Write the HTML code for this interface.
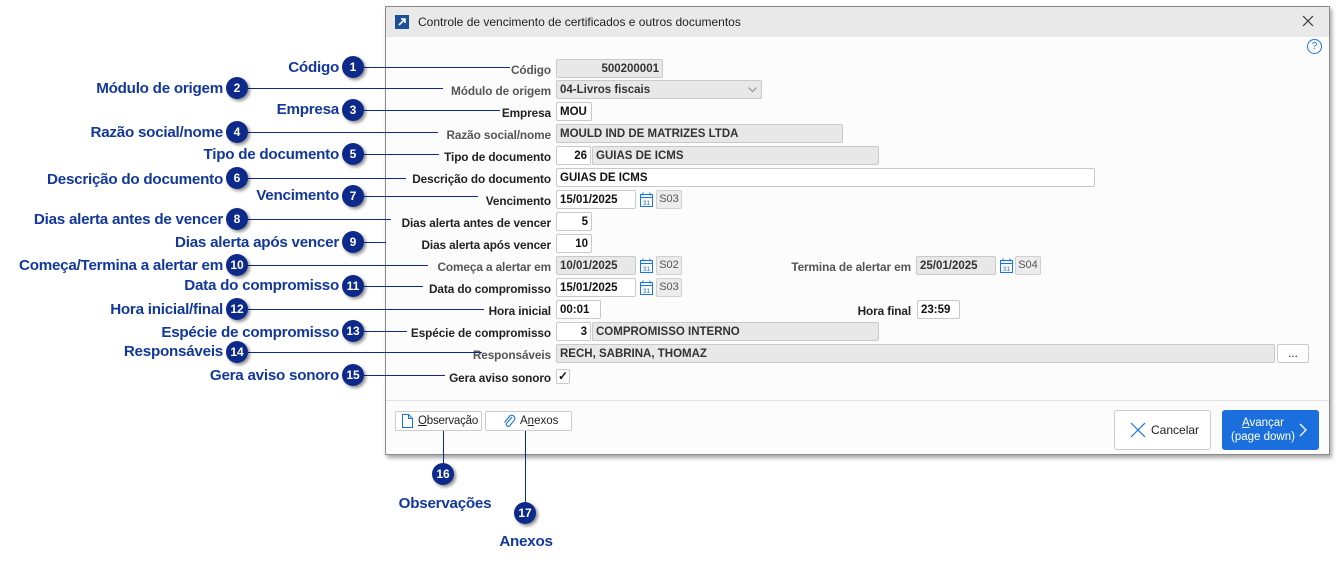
<!DOCTYPE html>
<html><head><meta charset="utf-8"><style>
*{margin:0;padding:0;box-sizing:border-box}
body{width:1340px;height:567px;background:#fff;position:relative;overflow:hidden;font-family:"Liberation Sans",sans-serif}
.a{position:absolute}
.dlg{left:385px;top:6px;width:945px;height:449px;background:#fcfcfc;border:1px solid #8a8a8a;box-shadow:2px 3px 4px rgba(0,0,0,.35)}
.tb{left:0;top:0;width:943px;height:30px;background:#e9e9e9}
.lb{position:absolute;right:789px;font-size:11.8px;font-weight:bold;color:#222;white-space:nowrap;line-height:14px;letter-spacing:-0.1px}
.lb.g{color:#555}
.f{position:absolute;height:19px;border:1px solid #c9c9c9;border-radius:2px;background:#fff;font-size:11.5px;font-weight:bold;color:#111;padding:1px 3px 0;line-height:17px;white-space:nowrap;overflow:hidden}
.f.d{background:#e8e8e8;color:#333}
.f.r{text-align:right}
.s{position:absolute;height:19px;width:26px;border:1px solid #d0d0d0;border-radius:2px;background:#ececec;font-size:11px;color:#555;line-height:17px;text-align:center}
.c{position:absolute;width:22px;height:22px;border-radius:50%;background:#0d2a8a;color:#fff;font:bold 12px "Liberation Sans",sans-serif;text-align:center;line-height:22px;box-shadow:2px 2px 3px rgba(0,0,0,.45)}
.cl{position:absolute;font-size:15.2px;font-weight:bold;color:#13389b;white-space:nowrap;line-height:18px;letter-spacing:-0.25px}
.ln{position:absolute;height:1.3px;background:#0d2a8a}
.vl{position:absolute;width:1.3px;background:#0d2a8a}
.cal{position:absolute;width:13px;height:15px}
</style></head><body>
<div class="a dlg">
 <div class="a tb"></div>
 <div class="a" style="left:9px;top:8px;width:14px;height:14px;background:#1a4f9a"><svg width="14" height="14"><path d="M4 10L10 4M6 4h4v4" stroke="#fff" stroke-width="1.6" fill="none"/></svg></div>
 <div class="a" style="left:32px;top:8px;font:12px 'Liberation Sans',sans-serif;color:#222">Controle de vencimento de certificados e outros documentos</div>
 <svg class="a" style="left:916px;top:8px" width="12" height="12"><path d="M1 1L11 11M11 1L1 11" stroke="#333" stroke-width="1.2"/></svg>
 <div class="a" style="left:921px;top:32px;width:15px;height:15px;border:1.3px solid #1a73e8;border-radius:50%;color:#1a73e8;font:10px 'Liberation Sans',sans-serif;text-align:center;line-height:13px">?</div>
 <div class="a" style="left:0;top:393px;width:943px;height:1px;background:#e2e2e2"></div>
</div>

<div class="lb g" style="top:63px">Código</div>
<div class="lb g" style="top:84px">Módulo de origem</div>
<div class="lb" style="top:106px">Empresa</div>
<div class="lb g" style="top:128px">Razão social/nome</div>
<div class="lb" style="top:150px">Tipo de documento</div>
<div class="lb" style="top:172px">Descrição do documento</div>
<div class="lb" style="top:194px">Vencimento</div>
<div class="lb" style="top:216px">Dias alerta antes de vencer</div>
<div class="lb" style="top:238px">Dias alerta após vencer</div>
<div class="lb g" style="top:260px">Começa a alertar em</div>
<div class="lb" style="top:282px">Data do compromisso</div>
<div class="lb" style="top:304px">Hora inicial</div>
<div class="lb" style="top:326px">Espécie de compromisso</div>
<div class="lb g" style="top:348px">Responsáveis</div>
<div class="lb" style="top:371px">Gera aviso sonoro</div>
<div class="lb g" style="top:260px;right:429px">Termina de alertar em</div>
<div class="lb" style="top:304px;right:429px">Hora final</div>

<div class="f d r" style="left:556px;top:59px;width:107px">500200001</div>
<div class="f d" style="left:556px;top:80px;width:206px">04-Livros fiscais<svg style="position:absolute;right:4px;top:6px" width="9" height="6"><path d="M0.5 0.5L4.5 4.5L8.5 0.5" stroke="#888" fill="none"/></svg></div>
<div class="f" style="left:556px;top:102px;width:36px">MOU</div>
<div class="f d" style="left:556px;top:124px;width:287px">MOULD IND DE MATRIZES LTDA</div>
<div class="f r" style="left:556px;top:146px;width:35px">26</div>
<div class="f d" style="left:592px;top:146px;width:287px">GUIAS DE ICMS</div>
<div class="f" style="left:556px;top:168px;width:539px">GUIAS DE ICMS</div>
<div class="f" style="left:556px;top:190px;width:80px">15/01/2025</div>
<div class="f r" style="left:556px;top:212px;width:36px">5</div>
<div class="f r" style="left:556px;top:234px;width:36px">10</div>
<div class="f d" style="left:556px;top:256px;width:80px">10/01/2025</div>
<div class="f" style="left:556px;top:278px;width:80px">15/01/2025</div>
<div class="f" style="left:556px;top:300px;width:45px">00:01</div>
<div class="f r" style="left:556px;top:322px;width:35px">3</div>
<div class="f d" style="left:592px;top:322px;width:287px">COMPROMISSO INTERNO</div>
<div class="f d" style="left:556px;top:344px;width:719px">RECH, SABRINA, THOMAZ</div>
<div class="f" style="left:1277px;top:344px;width:32px;text-align:center;font-weight:normal">...</div>
<div class="f" style="left:556px;top:369px;width:14px;height:15px;line-height:13px;padding:0;text-align:center;font-size:12px">✓</div>
<div class="f d" style="left:916px;top:256px;width:80px">25/01/2025</div>
<div class="f" style="left:917px;top:300px;width:43px">23:59</div>

<svg class="cal" style="left:640px;top:192px" viewBox="0 0 13 15"><rect x="0.5" y="2.5" width="12" height="12" fill="none" stroke="#1a73e8"/><path d="M0.5 5.5h12M3 0.5v3M10 0.5v3" stroke="#1a73e8"/><text x="6.5" y="13" font-size="6.5" fill="#1a73e8" text-anchor="middle" font-family="Liberation Sans">31</text></svg>
<div class="s" style="left:656px;top:190px">S03</div>
<svg class="cal" style="left:640px;top:258px" viewBox="0 0 13 15"><rect x="0.5" y="2.5" width="12" height="12" fill="none" stroke="#1a73e8"/><path d="M0.5 5.5h12M3 0.5v3M10 0.5v3" stroke="#1a73e8"/><text x="6.5" y="13" font-size="6.5" fill="#1a73e8" text-anchor="middle" font-family="Liberation Sans">31</text></svg>
<div class="s" style="left:656px;top:256px">S02</div>
<svg class="cal" style="left:640px;top:280px" viewBox="0 0 13 15"><rect x="0.5" y="2.5" width="12" height="12" fill="none" stroke="#1a73e8"/><path d="M0.5 5.5h12M3 0.5v3M10 0.5v3" stroke="#1a73e8"/><text x="6.5" y="13" font-size="6.5" fill="#1a73e8" text-anchor="middle" font-family="Liberation Sans">31</text></svg>
<div class="s" style="left:656px;top:278px">S03</div>
<svg class="cal" style="left:1000px;top:258px" viewBox="0 0 13 15"><rect x="0.5" y="2.5" width="12" height="12" fill="none" stroke="#1a73e8"/><path d="M0.5 5.5h12M3 0.5v3M10 0.5v3" stroke="#1a73e8"/><text x="6.5" y="13" font-size="6.5" fill="#1a73e8" text-anchor="middle" font-family="Liberation Sans">31</text></svg>
<div class="s" style="left:1015px;top:256px">S04</div>

<div class="a" style="left:395px;top:411px;width:87px;height:20px;border:1px solid #ccc;border-radius:2px;background:#fff;font:11.5px 'Liberation Sans',sans-serif;color:#222;line-height:18px;padding-left:22px;letter-spacing:-0.2px"><svg style="position:absolute;left:6px;top:2px" width="11" height="14"><path d="M0.5 0.5h6l4 4v9h-10z M6.5 0.5v4h4" stroke="#1a73e8" fill="none"/></svg><u>O</u>bservação</div>
<div class="a" style="left:485px;top:411px;width:87px;height:20px;border:1px solid #ccc;border-radius:2px;background:#fff;font:11.5px 'Liberation Sans',sans-serif;color:#222;line-height:18px;padding-left:34px"><svg style="position:absolute;left:17px;top:2px" width="13" height="15"><path d="M9 3L3.5 9.5a2 2 0 0 0 3 2.5L11.5 6a3.2 3.2 0 0 0-4.8-4L1.5 8.5" stroke="#1a73e8" fill="none" stroke-width="1.1"/></svg>A<u>n</u>exos</div>
<div class="a" style="left:1114px;top:410px;width:97px;height:40px;border:1px solid #ccc;border-radius:3px;background:#fff;font:12px 'Liberation Sans',sans-serif;color:#222;line-height:38px;padding-left:36px"><svg style="position:absolute;left:15px;top:11px" width="16" height="16"><path d="M1 1L15 15M15 1L1 15" stroke="#1a73e8" stroke-width="1.2"/></svg>Cancelar</div>
<div class="a" style="left:1222px;top:410px;width:97px;height:40px;border-radius:3px;background:#1b6fdc;font:11.5px 'Liberation Sans',sans-serif;color:#fff;line-height:14px;padding:6px 0 0 4px;text-align:center"><div style="width:74px"><u>A</u>vançar<br>(page down)</div><svg style="position:absolute;right:12px;top:13px" width="8" height="14"><path d="M1 1L7 7L1 13" stroke="#fff" fill="none" stroke-width="1.3"/></svg></div>

<div class="ln" style="left:364px;top:67px;width:146px"></div>
<div class="ln" style="left:248px;top:88px;width:195px"></div>
<div class="ln" style="left:364px;top:110px;width:136px"></div>
<div class="ln" style="left:248px;top:132px;width:190px"></div>
<div class="ln" style="left:364px;top:154px;width:75px"></div>
<div class="ln" style="left:248px;top:178px;width:158px"></div>
<div class="ln" style="left:364px;top:196px;width:114px"></div>
<div class="ln" style="left:248px;top:219px;width:143px"></div>
<div class="ln" style="left:364px;top:242px;width:22px"></div>
<div class="ln" style="left:248px;top:265px;width:180px"></div>
<div class="ln" style="left:364px;top:286px;width:59px"></div>
<div class="ln" style="left:248px;top:309px;width:236px"></div>
<div class="ln" style="left:364px;top:331px;width:43px"></div>
<div class="ln" style="left:248px;top:352px;width:234px"></div>
<div class="ln" style="left:364px;top:375px;width:81px"></div>
<div class="vl" style="left:443px;top:431px;height:33px"></div>
<div class="vl" style="left:525px;top:431px;height:72px"></div>

<div class="c" style="left:342px;top:56px">1</div>
<div class="c" style="left:226px;top:77px">2</div>
<div class="c" style="left:342px;top:99px">3</div>
<div class="c" style="left:226px;top:121px">4</div>
<div class="c" style="left:342px;top:143px">5</div>
<div class="c" style="left:226px;top:167px">6</div>
<div class="c" style="left:342px;top:185px">7</div>
<div class="c" style="left:226px;top:208px">8</div>
<div class="c" style="left:342px;top:231px">9</div>
<div class="c" style="left:226px;top:254px">10</div>
<div class="c" style="left:342px;top:275px">11</div>
<div class="c" style="left:226px;top:298px">12</div>
<div class="c" style="left:342px;top:320px">13</div>
<div class="c" style="left:226px;top:341px">14</div>
<div class="c" style="left:342px;top:364px">15</div>
<div class="c" style="left:432px;top:463px">16</div>
<div class="c" style="left:514px;top:502px">17</div>

<div class="cl" style="right:1001px;top:59px">Código</div>
<div class="cl" style="right:1117px;top:80px">Módulo de origem</div>
<div class="cl" style="right:1001px;top:101px">Empresa</div>
<div class="cl" style="right:1117px;top:124px">Razão social/nome</div>
<div class="cl" style="right:1001px;top:146px">Tipo de documento</div>
<div class="cl" style="right:1117px;top:171px">Descrição do documento</div>
<div class="cl" style="right:1001px;top:187px">Vencimento</div>
<div class="cl" style="right:1117px;top:211px">Dias alerta antes de vencer</div>
<div class="cl" style="right:1001px;top:234px">Dias alerta após vencer</div>
<div class="cl" style="right:1117px;top:257px">Começa/Termina a alertar em</div>
<div class="cl" style="right:1001px;top:277px">Data do compromisso</div>
<div class="cl" style="right:1117px;top:301px">Hora inicial/final</div>
<div class="cl" style="right:1001px;top:324px">Espécie de compromisso</div>
<div class="cl" style="right:1117px;top:343px">Responsáveis</div>
<div class="cl" style="right:1001px;top:367px">Gera aviso sonoro</div>
<div class="cl" style="left:395px;top:495px;width:100px;text-align:center">Observações</div>
<div class="cl" style="left:486px;top:533px;width:80px;text-align:center">Anexos</div>
</body></html>
